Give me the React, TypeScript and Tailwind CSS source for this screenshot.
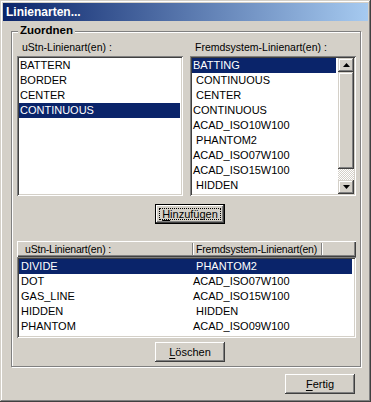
import React from "react";

const FONT = "font-['Liberation_Sans',Arial,sans-serif]";
const RAISED =
  "shadow-[inset_-1px_-1px_0_#404040,inset_1px_1px_0_#fff,inset_-2px_-2px_0_#808080]";
const SCROLLBTN =
  "shadow-[inset_-1px_-1px_0_#404040,inset_1px_1px_0_#d4d0c8,inset_-2px_-2px_0_#808080,inset_2px_2px_0_#fff]";
const SUNKEN =
  "shadow-[inset_1px_1px_0_#808080,inset_-1px_-1px_0_#fff,inset_2px_2px_0_#404040,inset_-2px_-2px_0_#d4d0c8]";

function Arrow({ up }: { up?: boolean }) {
  return (
    <svg width="7" height="4" viewBox="0 0 7 4">
      {up ? <polygon points="3.5,0 7,4 0,4" fill="#000" /> : <polygon points="0,0 7,0 3.5,4" fill="#000" />}
    </svg>
  );
}

export default function App() {
  const left = ["BATTERN", "BORDER", "CENTER", "CONTINUOUS"];
  const right = [
    "BATTING",
    " CONTINUOUS",
    " CENTER",
    "CONTINUOUS",
    "ACAD_ISO10W100",
    " PHANTOM2",
    "ACAD_ISO07W100",
    "ACAD_ISO15W100",
    " HIDDEN",
  ];
  const rows: [string, string][] = [
    ["DIVIDE", " PHANTOM2"],
    ["DOT", "ACAD_ISO07W100"],
    ["GAS_LINE", "ACAD_ISO15W100"],
    ["HIDDEN", " HIDDEN"],
    ["PHANTOM", "ACAD_ISO09W100"],
  ];

  return (
    <div
      className={`${FONT} w-[371px] h-[402px] bg-[#d4d0c8] p-[3px] flex flex-col text-black shadow-[inset_-1px_-1px_0_#404040,inset_1px_1px_0_#d4d0c8,inset_-2px_-2px_0_#808080,inset_2px_2px_0_#fff]`}
    >
      {/* Title bar */}
      <div className="h-[18px] flex items-center pl-[3px] bg-[linear-gradient(to_right,#0a246a,#a6caf0)]">
        <span className="text-white font-bold text-[12px] leading-[13px]">Linienarten...</span>
      </div>

      {/* Group box */}
      <div className="relative ml-[8px] mt-[10px] w-[350px] h-[336px] border border-[#808080] shadow-[inset_1px_1px_0_#fff,1px_1px_0_#fff] flex flex-col pl-[5px] pt-[9px]">
        <span className="absolute left-[6px] -top-[8px] px-[2px] bg-[#d4d0c8] font-bold text-[11.5px] leading-[13px]">
          Zuordnen
        </span>

        {/* Top two lists */}
        <div className="flex gap-[7px]">
          <div className="flex flex-col w-[166px]">
            <div className="h-[13px] leading-[13px] text-[10.5px] pl-[5px] mb-[2px] whitespace-nowrap">uStn-Linienart(en) :</div>
            <div className={`h-[140px] bg-white p-[2px] ${SUNKEN}`}>
              {left.map((t, i) => (
                <div
                  key={i}
                  className={`h-[15px] leading-[15px] text-[11px] px-[1px] whitespace-pre ${
                    i === 3 ? "bg-[#0a246a] text-white mr-[1px]" : ""
                  }`}
                >
                  {t}
                </div>
              ))}
            </div>
          </div>
          <div className="flex flex-col w-[166px]">
            <div className="h-[13px] leading-[13px] text-[10.5px] pl-[5px] mb-[2px] whitespace-nowrap">Fremdsystem-Linienart(en) :</div>
            <div className={`h-[140px] bg-white p-[2px] flex ${SUNKEN}`}>
              <div className="flex-1 flex flex-col">
                {right.map((t, i) => (
                  <div
                    key={i}
                    className={`h-[15px] leading-[15px] text-[11px] px-[1px] whitespace-pre ${
                      i === 0 ? "bg-[#0a246a] text-white mr-[2px]" : ""
                    }`}
                  >
                    {t}
                  </div>
                ))}
              </div>
              <div className="w-[16px] flex flex-col">
                <div className={`h-[14px] bg-[#d4d0c8] flex items-center justify-center ${SCROLLBTN}`}>
                  <Arrow up />
                </div>
                <div className={`h-[97px] bg-[#d4d0c8] ${SCROLLBTN}`} />
                <div className="flex-1 [background:repeating-conic-gradient(#fff_0_25%,#d4d0c8_0_50%)_0_0/2px_2px]" />
                <div className={`h-[14px] bg-[#d4d0c8] flex items-center justify-center ${SCROLLBTN}`}>
                  <Arrow />
                </div>
              </div>
            </div>
          </div>
        </div>

        {/* Hinzufügen */}
        <button
          className={`mt-[8px] ml-[138px] w-[70px] h-[20px] p-[3px] flex border border-black bg-[#d4d0c8] ${RAISED}`}
        >
          <span className="flex-1 flex items-center justify-center border border-dotted border-black text-[11px] leading-[12px]">
            <span>
              <span className="underline underline-offset-[2px]">H</span>inzufügen
            </span>
          </span>
        </button>

        {/* Bottom list */}
        <div className="mt-[17px] w-[339px] flex flex-col">
          <div className="h-[16px] flex items-stretch shadow-[inset_1px_1px_0_#fff,inset_-1px_-1px_0_#404040,inset_-2px_-2px_0_#808080] text-[10.5px] tracking-[-0.2px] whitespace-nowrap">
            <div className="w-[175px] flex items-center pl-[8px] leading-[13px] overflow-hidden">uStn-Linienart(en) :</div>
            <div className="w-[2px] flex flex-col py-[2px]">
              <div className="flex-1 flex">
                <div className="w-[1px] bg-[#808080]" />
                <div className="w-[1px] bg-white" />
              </div>
            </div>
            <div className="w-[127px] flex items-center pl-[2px] leading-[13px] overflow-hidden">Fremdsystem-Linienart(en)</div>
            <div className="w-[2px] flex flex-col py-[2px]">
              <div className="flex-1 flex">
                <div className="w-[1px] bg-[#808080]" />
                <div className="w-[1px] bg-white" />
              </div>
            </div>
            <div className="flex-1" />
          </div>
          <div className={`h-[81px] bg-white p-[2px] ${SUNKEN}`}>
            {rows.map(([a, b], i) => (
              <div
                key={i}
                className={`h-[15px] leading-[15px] text-[11px] flex whitespace-pre ${
                  i === 0 ? "bg-[#0a246a] text-white mr-[2px]" : ""
                }`}
              >
                <div className="w-[174px] pl-[2px]">{a}</div>
                <div className="flex-1">{b}</div>
              </div>
            ))}
          </div>
        </div>

        {/* Löschen */}
        <button className={`mt-[4px] ml-[138px] w-[70px] h-[20px] flex items-center justify-center bg-[#d4d0c8] text-[11px] ${RAISED}`}>
          <span>
            <span className="underline underline-offset-[2px]">L</span>öschen
          </span>
        </button>
      </div>

      {/* Fertig */}
      <button
        className={`self-end mr-[13px] mt-[7px] w-[70px] h-[20px] flex items-center justify-center bg-[#d4d0c8] text-[11px] ${RAISED}`}
      >
        <span>
          <span className="underline underline-offset-[2px]">F</span>ertig
        </span>
      </button>
    </div>
  );
}
